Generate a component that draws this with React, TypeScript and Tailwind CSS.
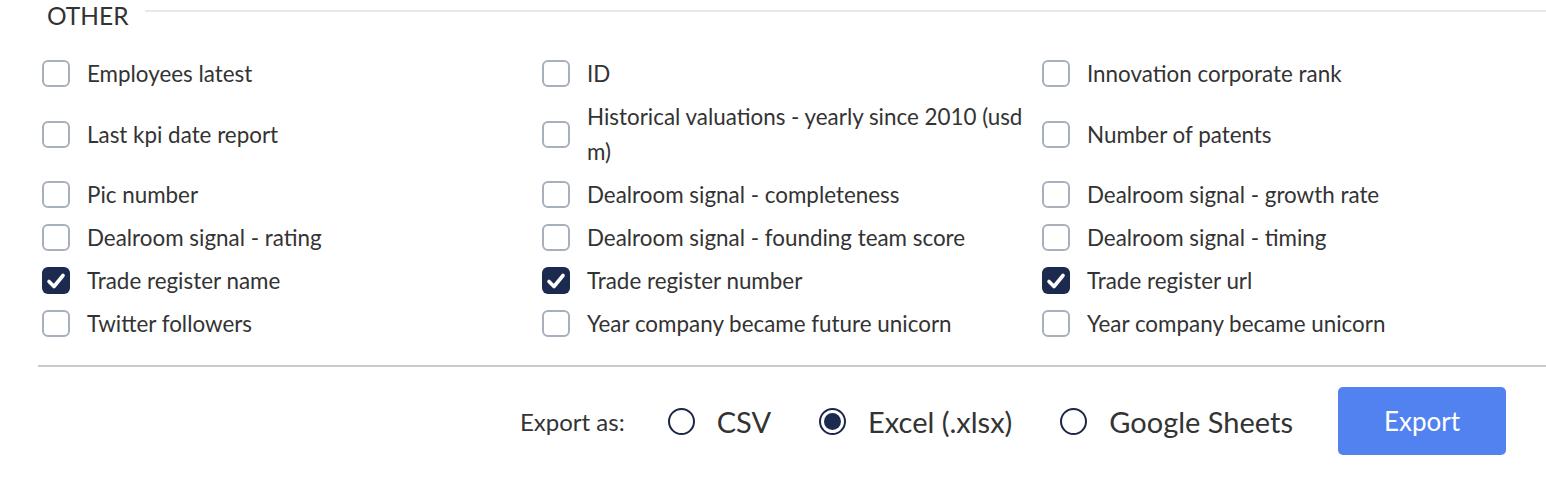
import React from "react";

type Item = { label: string; checked?: boolean };

const items: Item[] = [
  { label: "Employees latest" },
  { label: "ID" },
  { label: "Innovation corporate rank" },
  { label: "Last kpi date report" },
  { label: "Historical valuations - yearly since 2010 (usd m)" },
  { label: "Number of patents" },
  { label: "Pic number" },
  { label: "Dealroom signal - completeness" },
  { label: "Dealroom signal - growth rate" },
  { label: "Dealroom signal - rating" },
  { label: "Dealroom signal - founding team score" },
  { label: "Dealroom signal - timing" },
  { label: "Trade register name", checked: true },
  { label: "Trade register number", checked: true },
  { label: "Trade register url", checked: true },
  { label: "Twitter followers" },
  { label: "Year company became future unicorn" },
  { label: "Year company became unicorn" },
];

function Checkbox({ checked }: { checked?: boolean }) {
  if (checked) {
    return (
      <span className="flex h-[27px] w-[28px] shrink-0 items-center justify-center rounded-[6px] bg-[#1b2a4e]">
        <svg width="20" height="18" viewBox="0 0 20 18" fill="none">
          <path d="M3 9.5 L8 14.5 L17 3.5" stroke="white" strokeWidth="3.6" strokeLinecap="round" strokeLinejoin="round" />
        </svg>
      </span>
    );
  }
  return <span className="block h-[27px] w-[28px] shrink-0 rounded-[6px] border-2 border-[#a7b0bc] bg-white" />;
}

function Radio({ checked, label }: { checked?: boolean; label: string }) {
  return (
    <label className="flex items-center gap-[22px]">
      <span className="flex h-[27px] w-[27px] items-center justify-center rounded-full border-2 border-[#1b2547] bg-white">
        {checked && <span className="block h-[17px] w-[17px] rounded-full bg-[#1b2a4e]" />}
      </span>
      <span className="text-[29px] leading-[35px] text-[#333333]">{label}</span>
    </label>
  );
}

export default function App() {
  return (
    <div
      className="w-[1546px] h-[488px] bg-white text-[#333333] overflow-hidden"
      style={{ fontFamily: "Lato, 'Noto Sans', sans-serif" }}
    >
      <div className="flex h-[35px] items-start pl-[47px]">
        <div className="text-[24.5px] leading-[32px]">OTHER</div>
        <div className="ml-[16px] mt-[10px] h-[2px] flex-1 bg-[#e8e8e8]" />
      </div>

      <div className="mt-[21px] grid grid-cols-[500px_500px_500px] gap-y-[8px] pl-[42px]">
        {items.map((it) => (
          <div key={it.label} className="flex items-center gap-[17px] pr-[14px]">
            <Checkbox checked={it.checked} />
            <span className="text-[22.4px] leading-[35px]">{it.label}</span>
          </div>
        ))}
      </div>

      <div className="ml-[38px] mt-[24px] h-[2px] bg-[#cacaca]" />

      <div className="mt-[20px] flex items-center justify-end pr-[40px]">
        <span className="mr-[43px] text-[24px] leading-[35px]">Export as:</span>
        <div className="flex items-center gap-[48px]">
          <Radio label="CSV" />
          <Radio label="Excel (.xlsx)" checked />
          <Radio label="Google Sheets" />
        </div>
        <button className="ml-[45px] h-[68px] w-[168px] rounded-[5px] bg-[#5282f0] text-[26px] text-white">
          Export
        </button>
      </div>
    </div>
  );
}
